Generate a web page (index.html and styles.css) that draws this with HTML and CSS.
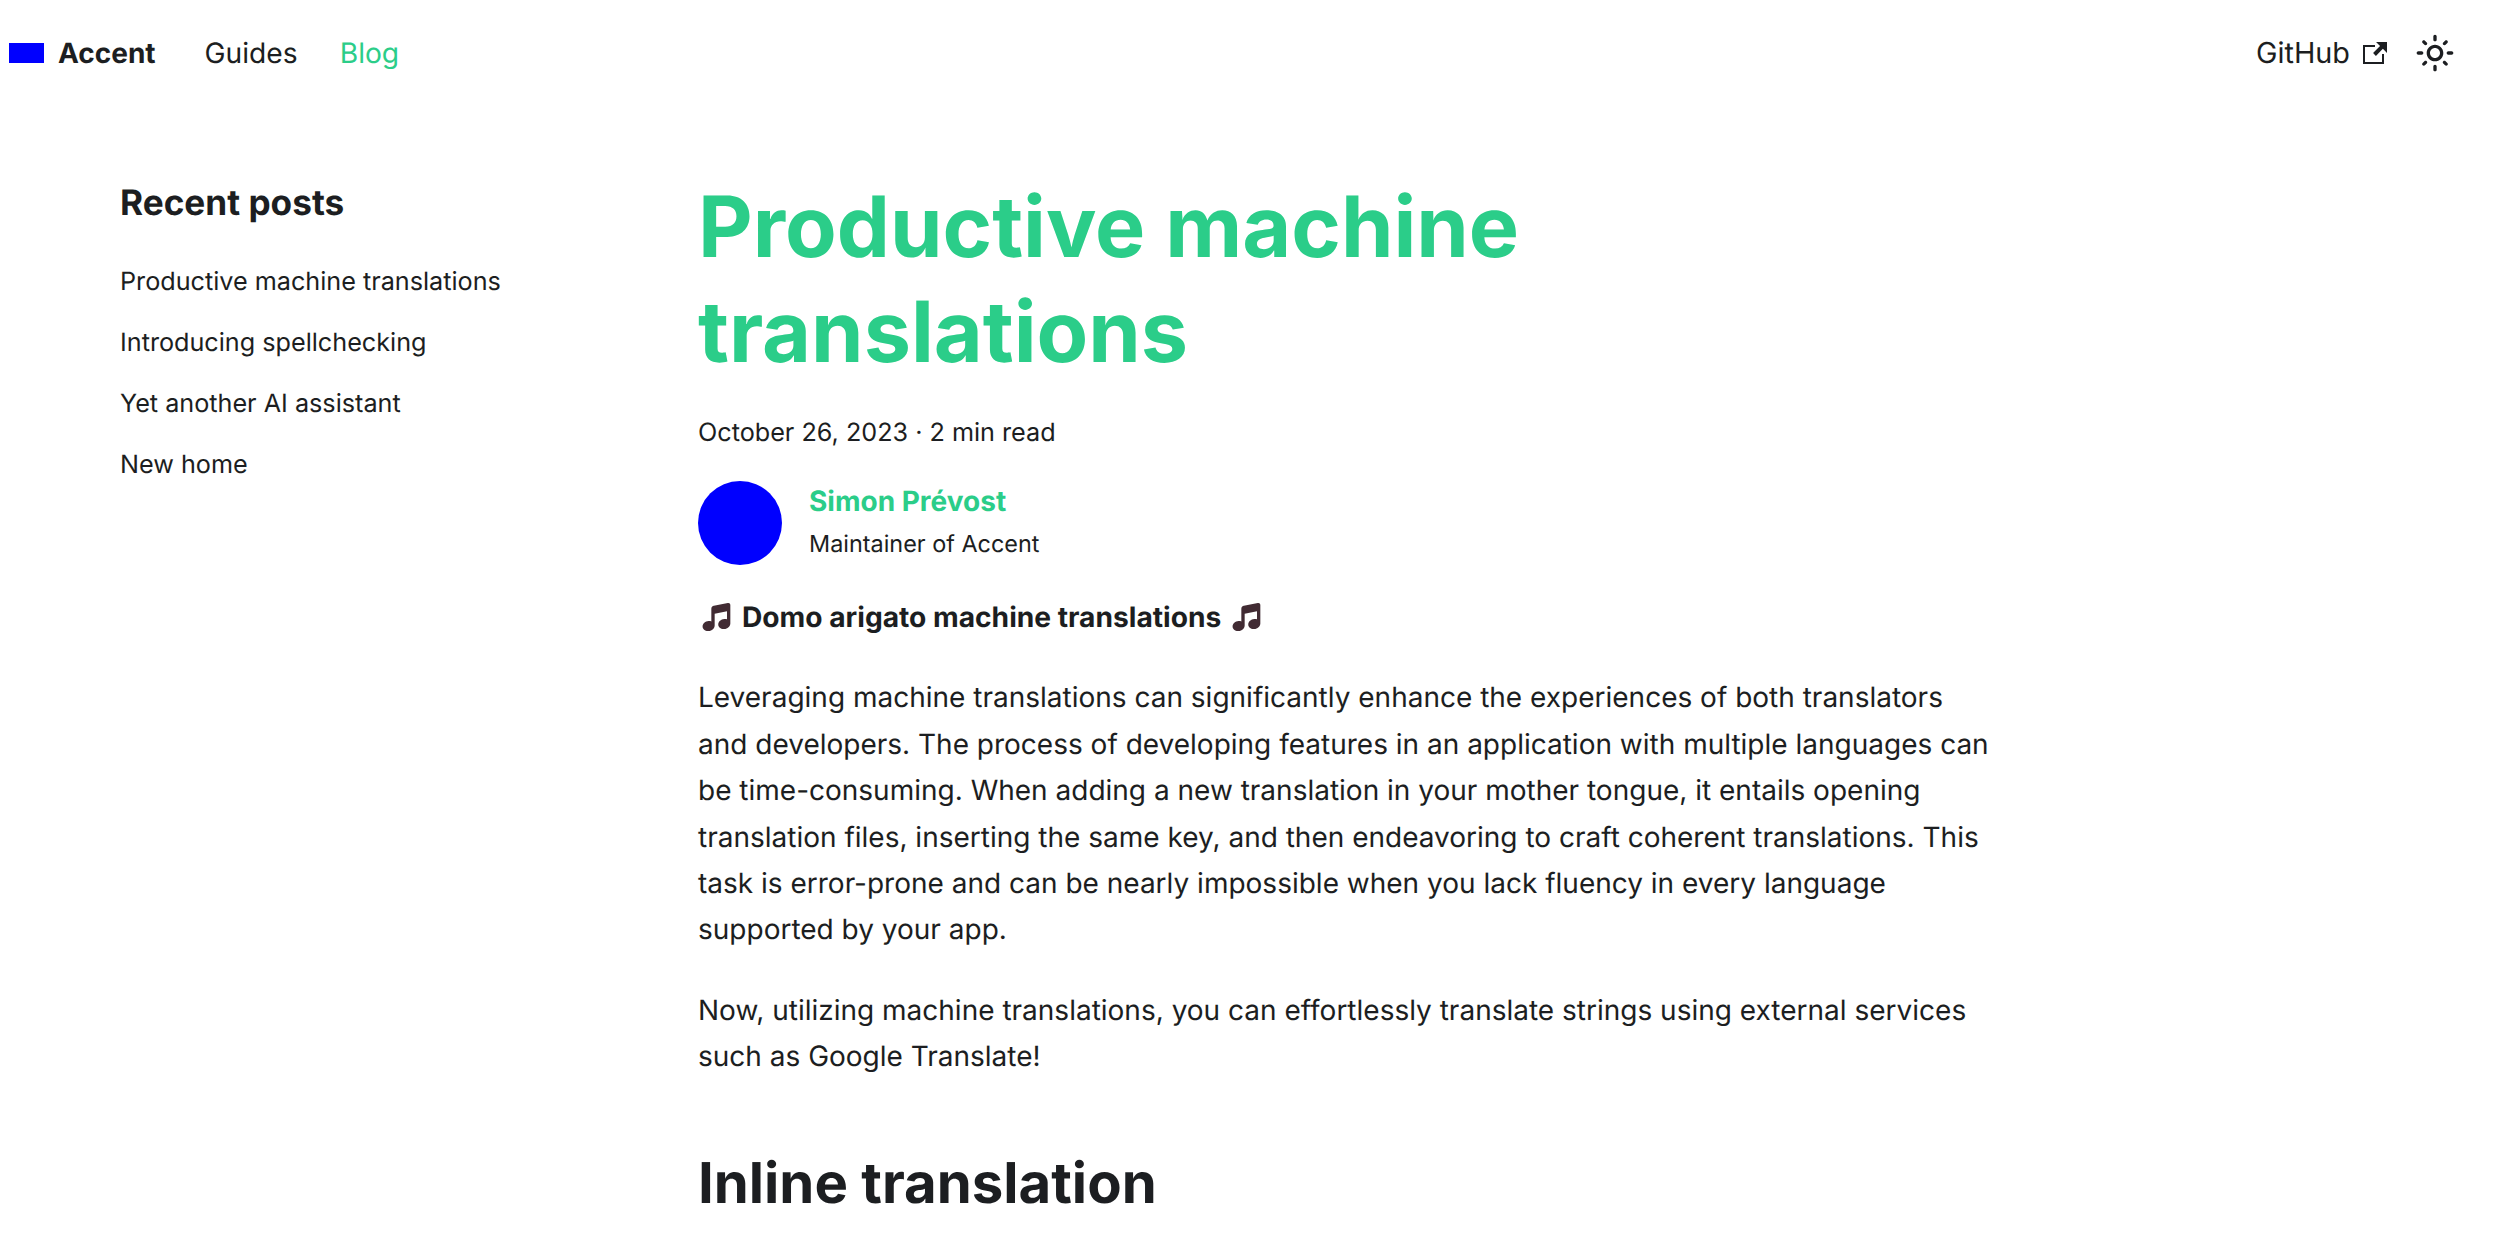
FILE: index.html
```html
<!DOCTYPE html>
<html lang="en">
  <head>
    <meta charset="UTF-8" />
    <meta name="viewport" content="width=device-width, initial-scale=1.0" />
    <title>Productive machine translations</title>
    <link rel="stylesheet" href="styles.css">
  </head>
  <body>
    <nav class="navbar">
      <a class="brand" href="#"><span class="brand-logo"></span><b>Accent</b></a>
      <a class="nav-link" href="#">Guides</a>
      <a class="nav-link active" href="#">Blog</a>
      <span class="nav-spacer"></span>
      <a class="nav-link github" href="#">GitHub
        <svg class="external" viewBox="0 0 24 24"><path fill="currentColor" d="M21 13v10h-21v-19h12v2h-10v15h17v-8h2zm3-12h-10.988l4.035 4-6.977 7.07 2.828 2.828 6.977-7.07 4.125 4.172v-11z"/></svg>
      </a>
      <button class="theme-toggle" type="button">
        <svg viewBox="0 0 24 24"><path fill="currentColor" d="M12,9c1.65,0,3,1.35,3,3s-1.35,3-3,3s-3-1.35-3-3S10.35,9,12,9 M12,7c-2.76,0-5,2.24-5,5s2.24,5,5,5s5-2.24,5-5 S14.76,7,12,7L12,7z M2,13l2,0c0.55,0,1-0.45,1-1s-0.45-1-1-1l-2,0c-0.55,0-1,0.45-1,1S1.45,13,2,13z M20,13l2,0c0.55,0,1-0.45,1-1 s-0.45-1-1-1l-2,0c-0.55,0-1,0.45-1,1S19.45,13,20,13z M11,2v2c0,0.55,0.45,1,1,1s1-0.45,1-1V2c0-0.55-0.45-1-1-1S11,1.45,11,2z M11,20v2c0,0.55,0.45,1,1,1s1-0.45,1-1v-2c0-0.55-0.45-1-1-1C11.45,19,11,19.45,11,20z M5.99,4.58c-0.39-0.39-1.03-0.39-1.41,0 c-0.39,0.39-0.39,1.03,0,1.41l1.06,1.06c0.39,0.39,1.03,0.39,1.41,0s0.39-1.03,0-1.41L5.99,4.58z M18.36,16.95 c-0.39-0.39-1.03-0.39-1.41,0c-0.39,0.39-0.39,1.03,0,1.41l1.06,1.06c0.39,0.39,1.03,0.39,1.41,0c0.39-0.39,0.39-1.03,0-1.41 L18.36,16.95z M19.42,5.99c0.39-0.39,0.39-1.03,0-1.41c-0.39-0.39-1.03-0.39-1.41,0l-1.06,1.06c-0.39,0.39-0.39,1.03,0,1.41 s1.03,0.39,1.41,0L19.42,5.99z M7.05,18.36c0.39-0.39,0.39-1.03,0-1.41c-0.39-0.39-1.03-0.39-1.41,0l-1.06,1.06 c-0.39,0.39-0.39,1.03,0,1.41s1.03,0.39,1.41,0L7.05,18.36z"/></svg>
      </button>
    </nav>

    <div class="layout">
      <aside class="sidebar">
        <div class="sidebar-title">Recent posts</div>
        <ul class="sidebar-list">
          <li>Productive machine translations</li>
          <li>Introducing spellchecking</li>
          <li>Yet another AI assistant</li>
          <li>New home</li>
        </ul>
      </aside>

      <main class="post">
        <h1 class="post-title">Productive machine translations</h1>
        <div class="post-meta">October 26, 2023 · 2 min read</div>
        <div class="author">
          <span class="avatar"></span>
          <div>
            <div class="author-name">Simon Prévost</div>
            <div class="author-role">Maintainer of Accent</div>
          </div>
        </div>
        <p class="lead">
          <svg class="note" viewBox="0 0 36 36"><path fill="#412b33" d="M34 3.5c0-1.7-1.4-2.7-3-2.3L14.2 4.6c-1.6.3-3 1.7-3 3.4v15.3c-1-.4-2.1-.6-3.3-.5C3.900 23.100.7 26 .7 29.400s3.300 5.900 7.300 5.500c3.900-.3 7.200-3.400 7.200-6.800V14.200l14.800-3v9.600c-1-.4-2.100-.6-3.300-.5-4 .3-7.200 3.300-7.200 6.600s3.200 5.900 7.200 5.500c3.900-.3 7.300-3.300 7.300-6.700z"/></svg>
          <strong>Domo arigato machine translations</strong>
          <svg class="note" viewBox="0 0 36 36"><path fill="#412b33" d="M34 3.5c0-1.7-1.4-2.7-3-2.3L14.2 4.6c-1.6.3-3 1.7-3 3.4v15.3c-1-.4-2.1-.6-3.3-.5C3.900 23.100.7 26 .7 29.400s3.300 5.900 7.300 5.500c3.900-.3 7.200-3.400 7.200-6.800V14.200l14.800-3v9.600c-1-.4-2.100-.6-3.300-.5-4 .3-7.200 3.300-7.200 6.600s3.200 5.900 7.200 5.500c3.900-.3 7.300-3.300 7.300-6.700z"/></svg>
        </p>
        <p>Leveraging machine translations can significantly enhance the experiences of both translators and developers. The process of developing features in an application with multiple languages can be time-consuming. When adding a new translation in your mother tongue, it entails opening translation files, inserting the same key, and then endeavoring to craft coherent translations. This task is error-prone and can be nearly impossible when you lack fluency in every language supported by your app.</p>
        <p>Now, utilizing machine translations, you can effortlessly translate strings using external services such as Google Translate!</p>
        <h2 class="post-heading">Inline translation</h2>
      </main>
    </div>
  </body>
</html>
```

FILE: styles.css
```css
html,
body {
  height: 100%;
  overflow: hidden;
}

body {
  margin: 0;
  font-family: Inter, "Liberation Sans", sans-serif;
  font-size: 28px;
  font-weight: 380;
  line-height: 46.4px;
  color: #1c1e21;
  background-color: #fff;
  text-rendering: geometricPrecision;
}

a {
  color: inherit;
  text-decoration: none;
}

.navbar {
  display: flex;
  align-items: center;
  height: 106px;
  padding: 0 54px 0 9px;
  box-sizing: border-box;
}

.brand {
  display: flex;
  align-items: center;
  margin-right: 49px;
}

.brand-logo {
  width: 35px;
  height: 20px;
  margin-right: 14px;
  background-color: #0000ff;
}

.nav-link {
  margin-right: 42px;
  font-size: 28.2px;
}

.nav-link.active {
  color: #2bcd89;
}

.nav-spacer {
  flex: 1;
}

.github {
  display: flex;
  align-items: center;
  margin-right: 28px;
  font-size: 28.8px;
}

.external {
  width: 24px;
  height: 24px;
  margin-left: 13px;
}

.theme-toggle {
  display: flex;
  width: 40px;
  height: 40px;
  padding: 0;
  border: none;
  color: #1c1e21;
  background: none;
}

.layout {
  display: flex;
  padding: 69px 0 0 120px;
}

.sidebar {
  width: 578px;
  flex-shrink: 0;
}

.sidebar-title {
  margin-bottom: 33px;
  font-size: 35.2px;
  font-weight: 700;
  line-height: 56px;
}

.sidebar-list {
  margin: 0;
  padding: 0;
  list-style: none;
  font-size: 25.2px;
  line-height: 36px;
}

.sidebar-list li {
  margin-bottom: 25px;
}

.post {
  width: 1300px;
}

.post-title {
  width: 1000px;
  margin: 0 0 29px;
  font-size: 84.4px;
  font-weight: 700;
  line-height: 105px;
  color: #2bcd89;
}

.post-meta {
  margin-bottom: 29px;
  font-size: 25.2px;
  line-height: 38px;
}

.author {
  display: flex;
  align-items: center;
  margin-bottom: 29px;
}

.avatar {
  width: 84px;
  height: 84px;
  margin-right: 27px;
  border-radius: 50%;
  background-color: #0000ff;
}

.author-name {
  font-weight: 700;
  line-height: 41px;
  color: #2bcd89;
}

.author-role {
  font-size: 23.4px;
  line-height: 43px;
}

p {
  margin: 0 0 34px;
}

.lead {
  display: flex;
  align-items: center;
  gap: 10px;
  margin-bottom: 34px;
}

.lead strong {
  margin-right: -3px;
  font-size: 28.16px;
}

.note {
  width: 30px;
  height: 30px;
  margin-left: 4px;
}

.post-heading {
  margin: 68px 0 0;
  font-size: 56.3px;
  font-weight: 700;
  line-height: 70px;
}
```
